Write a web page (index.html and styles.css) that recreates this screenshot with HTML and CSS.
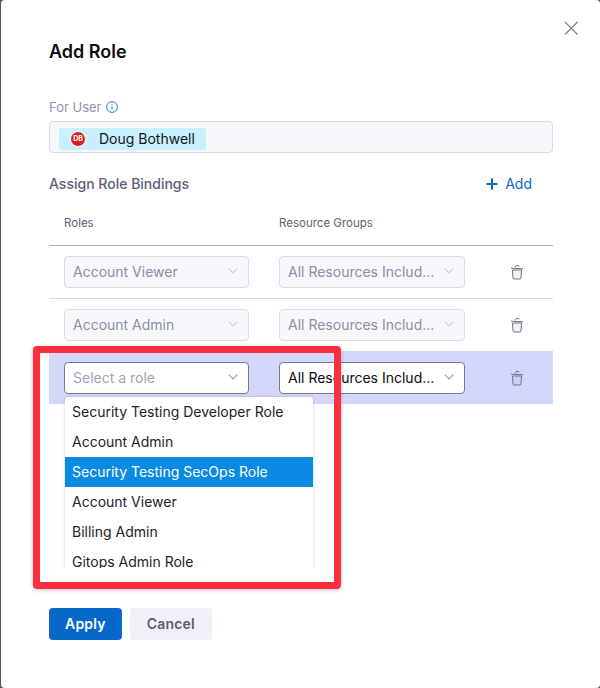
FILE: index.html
```html
<!DOCTYPE html>
<html lang="en">
<head>
  <meta charset="UTF-8" />
  <meta name="viewport" content="width=device-width, initial-scale=1.0" />
  <title>Add Role</title>
  <link rel="stylesheet" href="styles.css">
</head>
<body>
  <div class="dialog">
    <svg class="close" width="14" height="14" viewBox="0 0 14 14"><path d="M1 1l12.5 12.5M13.500 1L1 13.500" /></svg>

    <h1 class="title">Add Role</h1>

    <div class="for-user">
      <span>For User</span>
      <svg width="12" height="12" viewBox="0 0 12 12"><circle cx="6" cy="6" r="5.4" /><path d="M6 5.4v3.200M6 3v1.100" /></svg>
    </div>
    <div class="user-field">
      <div class="chip">
        <span class="avatar">DB</span>
        <span class="chip-name">Doug Bothwell</span>
      </div>
    </div>

    <div class="bindings-head">
      <span class="bindings-title">Assign Role Bindings</span>
      <span class="add">
        <svg width="12" height="12" viewBox="0 0 12 12"><path d="M6 .5v11M.5 6h11" /></svg>
        Add
      </span>
    </div>

    <div class="table-head">
      <span>Roles</span>
      <span>Resource Groups</span>
    </div>

    <div class="row first">
      <div class="select disabled">
        <span>Account Viewer</span>
        <svg class="chevron" width="10" height="6" viewBox="0 0 10 6"><path d="M.7.7L5 5l4.3-4.3" /></svg>
      </div>
      <div class="select disabled">
        <span>All Resources Includ...</span>
        <svg class="chevron" width="10" height="6" viewBox="0 0 10 6"><path d="M.7.7L5 5l4.3-4.3" /></svg>
      </div>
      <svg class="trash" width="14" height="16" viewBox="0 0 14 16"><path class="lid" d="M1 4.2l12 .6M5.200 3.400L6.400 1.200l3 .9" /><path class="bin" d="M2.400 6h9.200l-.7 8.200a1 1 0 0 1-1 .8H4.100a1 1 0 0 1-1-.8z" /></svg>
    </div>

    <div class="row">
      <div class="select disabled">
        <span>Account Admin</span>
        <svg class="chevron" width="10" height="6" viewBox="0 0 10 6"><path d="M.7.7L5 5l4.3-4.3" /></svg>
      </div>
      <div class="select disabled">
        <span>All Resources Includ...</span>
        <svg class="chevron" width="10" height="6" viewBox="0 0 10 6"><path d="M.7.7L5 5l4.3-4.3" /></svg>
      </div>
      <svg class="trash" width="14" height="16" viewBox="0 0 14 16"><path class="lid" d="M1 4.2l12 .6M5.200 3.400L6.400 1.200l3 .9" /><path class="bin" d="M2.400 6h9.200l-.7 8.200a1 1 0 0 1-1 .8H4.100a1 1 0 0 1-1-.8z" /></svg>
    </div>

    <div class="row active">
      <div class="select placeholder">
        <span>Select a role</span>
        <svg class="chevron" width="10" height="6" viewBox="0 0 10 6"><path d="M.7.7L5 5l4.3-4.3" /></svg>
        <ul class="menu">
          <li>Security Testing Developer Role</li>
          <li>Account Admin</li>
          <li class="selected">Security Testing SecOps Role</li>
          <li>Account Viewer</li>
          <li>Billing Admin</li>
          <li>Gitops Admin Role</li>
        </ul>
      </div>
      <div class="select">
        <span>All Resources Includ...</span>
        <svg class="chevron" width="10" height="6" viewBox="0 0 10 6"><path d="M.7.7L5 5l4.3-4.3" /></svg>
      </div>
      <svg class="trash" width="14" height="16" viewBox="0 0 14 16"><path class="lid" d="M1 4.2l12 .6M5.200 3.400L6.400 1.200l3 .9" /><path class="bin" d="M2.400 6h9.200l-.7 8.200a1 1 0 0 1-1 .8H4.100a1 1 0 0 1-1-.8z" /></svg>
    </div>

    <div class="actions">
      <button class="btn primary">Apply</button>
      <button class="btn">Cancel</button>
    </div>

    <div class="highlight"></div>
  </div>
</body>
</html>
```

FILE: styles.css
```css
* {
  box-sizing: border-box;
}

html, body {
  height: 100%;
}

body {
  margin: 0;
  overflow: hidden;
  background-color: #565b60;
  font-family: Inter, "Noto Sans", sans-serif;
  font-size: 14px;
}

.dialog {
  position: relative;
  height: 688px;
  margin-left: 1px;
  padding: 40px 47px 0 48px;
  background-color: white;
  border-radius: 4px;
}

.close {
  position: absolute;
  top: 21px;
  left: 563px;
}

.close path {
  fill: none;
  stroke: #7c7d94;
  stroke-width: 1.1;
}

.title {
  margin: 0;
  font-size: 18px;
  line-height: 24px;
  font-weight: 600;
  color: #0b0b0d;
}

.for-user {
  display: flex;
  align-items: center;
  gap: 4px;
  margin-top: 35px;
  height: 16px;
  font-size: 13px;
  color: #9293ab;
}

.for-user svg {
  fill: none;
  stroke: #1b80d8;
  stroke-width: 1;
}

.user-field {
  height: 32px;
  margin-top: 6px;
  padding: 5px 9px;
  background-color: #f7f8fb;
  border: 1px solid #d9dae5;
  border-radius: 4px;
}

.chip {
  display: inline-flex;
  align-items: center;
  gap: 13px;
  height: 22px;
  padding: 0 11px;
  background-color: #c9f0fe;
  border-radius: 2px;
  color: #14141a;
}

.chip-name {
  padding-bottom: 2px;
}

.avatar {
  width: 16px;
  height: 16px;
  border: 1.5px solid white;
  border-radius: 50%;
  background-color: #dc2020;
  color: white;
  font-size: 7px;
  font-weight: 700;
  line-height: 13px;
  text-align: center;
}

.bindings-head {
  display: flex;
  justify-content: space-between;
  align-items: center;
  height: 20px;
  margin-top: 21px;
  padding-right: 21px;
  padding-bottom: 2px;
}

.bindings-title {
  font-weight: 500;
  color: #5c5d75;
}

.add {
  display: flex;
  align-items: center;
  gap: 7px;
  color: #0868ca;
}

.add svg {
  fill: none;
  stroke: #0868ca;
  stroke-width: 2;
  margin-top: 2px;
}

.table-head,
.row {
  display: grid;
  grid-template-columns: 185px 186px auto;
  column-gap: 30px;
  padding-left: 15px;
}

.table-head {
  padding-top: 21px;
  padding-bottom: 14px;
  font-size: 11.5px;
  line-height: 16px;
  color: #5f6077;
}

.row {
  align-items: center;
  padding-top: 10px;
  padding-bottom: 10px;
  border-top: 1px solid #d9dae5;
}

.row.first {
  border-top-color: #b0b1c4;
}

.row.active {
  background-color: #d3d8fb;
  border-top-color: #d3d8fb;
}

.select {
  position: relative;
  display: flex;
  align-items: center;
  justify-content: space-between;
  height: 32px;
  padding: 0 10px 2px 8px;
  background-color: white;
  border: 1px solid #77788f;
  border-radius: 4px;
  color: #0b0b0d;
}

.select.disabled {
  background-color: #f7f8fb;
  border-color: #d9dae5;
  color: #8d8ea6;
}

.select.placeholder {
  color: #a2a3b6;
}

.chevron {
  fill: none;
  stroke: #9a9bb0;
  stroke-width: 1.1;
}

.select.disabled .chevron {
  stroke: #cdcedb;
}

.trash {
  margin-left: 15px;
}

.trash .lid {
  fill: none;
  stroke: #6f7088;
  stroke-width: 1;
}

.trash .bin {
  fill: rgba(150, 152, 180, 0.12);
  stroke: #6f7088;
  stroke-width: 1;
}

.menu {
  position: absolute;
  top: 34px;
  left: 0;
  z-index: 1;
  width: 248px;
  height: 171px;
  margin: 0;
  padding: 0;
  overflow: hidden;
  list-style: none;
  background-color: white;
  border-radius: 3px 3px 0 0;
  box-shadow: 0 0 3px rgba(40, 41, 61, 0.25);
  clip-path: inset(-4px -4px 0 -4px);
  color: #22222a;
}

.menu li {
  height: 30px;
  padding: 0 7px;
  line-height: 30px;
}

.menu .selected {
  background-color: #0a8ae2;
  color: white;
}

.actions {
  display: flex;
  gap: 8px;
  margin-top: 204px;
}

.btn {
  height: 32px;
  padding: 0 17px 2px;
  border: none;
  border-radius: 4px;
  background-color: #f0f1f8;
  color: #5c5d75;
  font-family: inherit;
  font-size: 14px;
  font-weight: 600;
  letter-spacing: 0.2px;
}

.btn.primary {
  padding: 0 16px 2px;
  background-color: #0868ca;
  color: white;
}

/* caixa vermelha por cima do dropdown */
.highlight {
  position: absolute;
  top: 346px;
  left: 32px;
  z-index: 2;
  width: 308px;
  height: 243px;
  border: 7px solid #fd2f3f;
  border-radius: 4px;
  box-shadow: 0 1px 4px rgba(40, 41, 61, 0.25);
}
```
